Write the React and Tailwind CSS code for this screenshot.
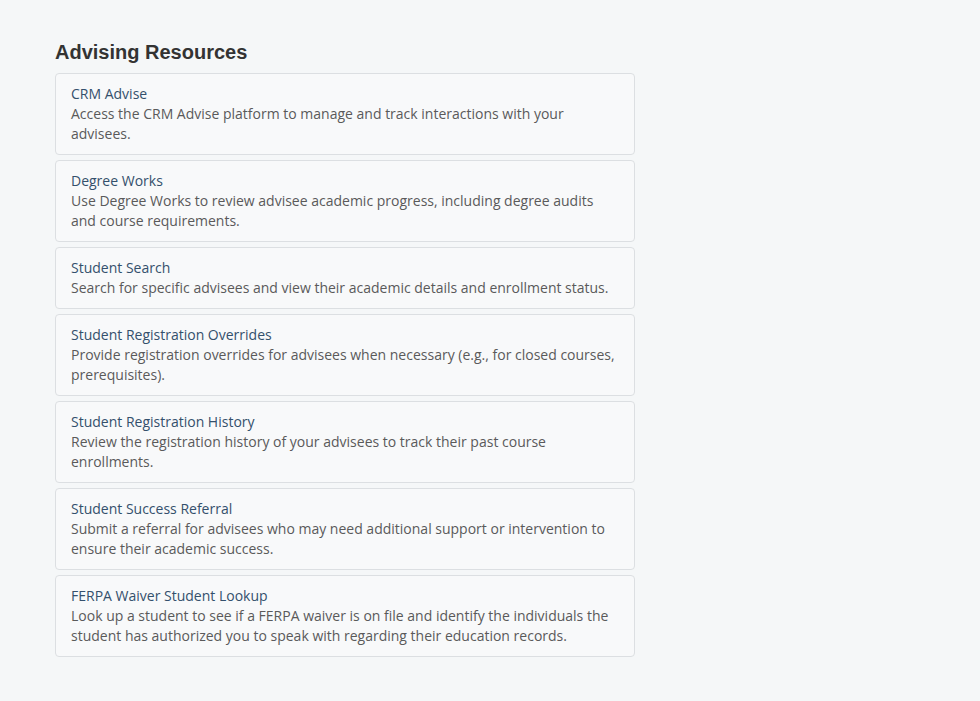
const items = [
  ["CRM Advise", "Access the CRM Advise platform to manage and track interactions with your advisees."],
  ["Degree Works", "Use Degree Works to review advisee academic progress, including degree audits and course requirements."],
  ["Student Search", "Search for specific advisees and view their academic details and enrollment status."],
  ["Student Registration Overrides", "Provide registration overrides for advisees when necessary (e.g., for closed courses, prerequisites)."],
  ["Student Registration History", "Review the registration history of your advisees to track their past course enrollments."],
  ["Student Success Referral", "Submit a referral for advisees who may need additional support or intervention to ensure their academic success."],
  ["FERPA Waiver Student Lookup", "Look up a student to see if a FERPA waiver is on file and identify the individuals the student has authorized you to speak with regarding their education records."],
];

export default function App() {
  return (
    <div className="min-h-[701px] bg-[#f5f7f8] pl-[55px] pt-[40px]" style={{ fontFamily: '"Open Sans", sans-serif' }}>
      <h2 className="text-[20px] leading-[24px] font-bold text-[#333333] mb-[9px]" style={{ fontFamily: '"Liberation Sans", Arial, sans-serif' }}>
        Advising Resources
      </h2>
      <div className="flex flex-col gap-[5px] w-[580px]">
        {items.map(([t, d]) => (
          <div key={t} className="border border-[#dcdfe2] rounded-[4px] bg-[#f8f9fa] px-[15px] py-[10px] text-[14px] leading-[20px]">
            <div className="text-[#34506c]">{t}</div>
            <div className="text-[#5a5a5a]">{d}</div>
          </div>
        ))}
      </div>
    </div>
  );
}
